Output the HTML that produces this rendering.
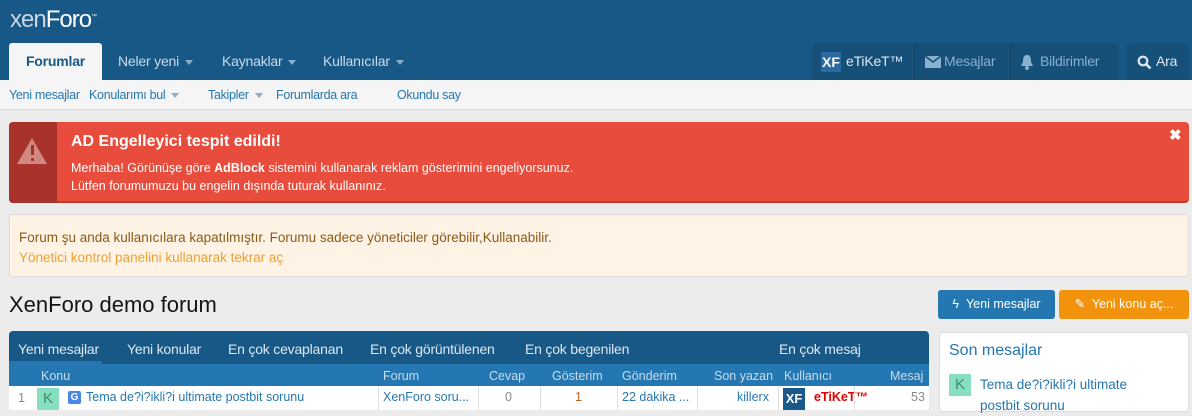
<!DOCTYPE html>
<html><head><meta charset="utf-8"><style>
*{box-sizing:border-box;margin:0;padding:0}
body{width:1192px;height:410px;overflow:hidden;background:#ececec;font-family:"Liberation Sans",sans-serif;font-size:13px;color:#141414;position:relative}
.a{position:absolute;white-space:nowrap}
#hdr{position:absolute;left:0;top:0;width:1192px;height:80px;background:#185886}
.logo{left:10px;top:6px;font-size:24px;color:#fff;letter-spacing:-1px}
.logo span{color:#c8d6e2}
.tab{top:43px;height:37px;line-height:37px;font-size:14px;color:#c8dcec;letter-spacing:-0.2px}
.car{display:inline-block;border-left:4px solid transparent;border-right:4px solid transparent;border-top:5px solid #8ab0cf;margin-left:6px;vertical-align:middle}
#sub{position:absolute;left:0;top:80px;width:1192px;height:30px;background:#f5f5f5;border-bottom:1px solid #d8d8d8}
#sub .a{top:8px;color:#2577b1;font-size:12.5px;letter-spacing:-0.3px}
.rb{top:43px;height:37px;background:#164f78;border-radius:4px 4px 0 0}
</style></head><body>
<div id="hdr">
<div class="a logo"><span>xen</span>Foro<sup style="font-size:6px">™</sup></div>
<div class="a tab" style="left:9px;width:93px;background:#f5f5f5;border-radius:3px 3px 0 0;color:#185886;font-weight:bold;text-align:center;">Forumlar</div>
<div class="a tab" style="left:118px">Neler yeni<span class="car"></span></div>
<div class="a tab" style="left:222px">Kaynaklar<span class="car"></span></div>
<div class="a tab" style="left:323px">Kullanıcılar<span class="car"></span></div>
<div class="a rb" style="left:812px;width:307px"></div>
<div class="a rb" style="left:1127px;width:62px"></div>
<div class="a" style="left:821px;top:52px;width:20px;height:20px;background:#2a6aa0;color:#fff;font-weight:bold;font-size:14px;line-height:20px;text-align:center">XF</div>
<div class="a tab" style="left:846px;color:#dce8f2">eTiKeT™</div>
<div class="a" style="left:914px;top:43px;width:1px;height:37px;background:#134569"></div>
<div class="a" style="left:1010px;top:43px;width:1px;height:37px;background:#134569"></div>
<svg class="a" style="left:925px;top:56px" width="16" height="12" viewBox="0 0 16 12"><rect width="16" height="12" fill="#8ab0cf"/><path d="M0 0 L8 6 L16 0" stroke="#164f78" stroke-width="1.5" fill="none"/></svg>
<div class="a tab" style="left:944px;color:#8ab0cf">Mesajlar</div>
<svg class="a" style="left:1020px;top:54px" width="14" height="16" viewBox="0 0 14 16"><path d="M7 1 C3 1 3 5 3 8 L1 12 L13 12 L11 8 C11 5 11 1 7 1Z" fill="#8ab0cf"/><circle cx="7" cy="14" r="2" fill="#8ab0cf"/></svg>
<div class="a tab" style="left:1040px;color:#8ab0cf">Bildirimler</div>
<svg class="a" style="left:1137px;top:55px" width="15" height="15" viewBox="0 0 15 15"><circle cx="6" cy="6" r="4.3" stroke="#dce8f2" stroke-width="2.2" fill="none"/><path d="M9 9 L13.5 13.5" stroke="#dce8f2" stroke-width="2.6"/></svg>
<div class="a tab" style="left:1156px;color:#dce8f2">Ara</div>
</div>
<div id="sub">
<div class="a" style="left:9px">Yeni mesajlar</div>
<div class="a" style="left:89px">Konularımı bul<span class="car"></span></div>
<div class="a" style="left:208px">Takipler<span class="car"></span></div>
<div class="a" style="left:276px">Forumlarda ara</div>
<div class="a" style="left:397px">Okundu say</div>
</div>
<div class="a" style="left:9px;top:122px;width:1180px;height:81px;background:#e74c3c;border-radius:4px;border-bottom:2px solid #c0392b"></div>
<div class="a" style="left:9px;top:122px;width:48px;height:81px;background:#a8332b;border-radius:4px 0 0 4px"></div>
<div class="a" style="left:17px;top:138px;width:0;height:0;border-left:15px solid transparent;border-right:15px solid transparent;border-bottom:26px solid #d08880"></div>
<div class="a" style="left:31px;top:145px;width:3px;height:10px;background:#a8332b"></div>
<div class="a" style="left:31px;top:158px;width:3px;height:3px;background:#a8332b"></div>
<div class="a" style="left:71px;top:133px;color:#fff;font-weight:bold;font-size:16px">AD Engelleyici tespit edildi!</div>
<div class="a" style="left:71px;top:161px;color:#fff;font-size:12.5px">Merhaba! Görünüşe göre <b>AdBlock</b> sistemini kullanarak reklam gösterimini engeliyorsunuz.</div>
<div class="a" style="left:71px;top:179px;color:#fff;font-size:12.5px">Lütfen forumumuzu bu engelin dışında tuturak kullanınız.</div>
<div class="a" style="left:1169px;top:126px;color:#fff;font-weight:bold;font-size:15px">✖</div>
<div class="a" style="left:9px;top:214px;width:1180px;height:63px;background:#fef3e5;border:1px solid #dcdcdc;border-radius:3px"></div>
<div class="a" style="left:19px;top:230px;color:#8c5a18;font-size:13.5px">Forum şu anda kullanıcılara kapatılmıştır. Forumu sadece yöneticiler görebilir,Kullanabilir.</div>
<div class="a" style="left:19px;top:250px;color:#f0a030;font-size:13.5px">Yönetici kontrol panelini kullanarak tekrar aç</div>
<div class="a" style="left:9px;top:292px;font-size:22px;color:#141414">XenForo demo forum</div>
<div class="a" style="left:938px;top:290px;width:117px;height:29px;background:#2577b1;border-radius:3px;color:#fff;line-height:29px;text-align:center;font-size:12.5px">ϟ&nbsp; Yeni mesajlar</div>
<div class="a" style="left:1059px;top:290px;width:130px;height:29px;background:#f2930d;border-radius:3px;color:#fff;line-height:29px;text-align:center;font-size:12.5px">✎&nbsp; Yeni konu aç...</div>
<div class="a" style="left:9px;top:331px;width:920px;height:79px;background:#185886;border-radius:4px 4px 0 0"></div>
<div class="a" style="left:9px;top:364px;width:920px;height:22px;background:#2577b1"></div>
<div class="a" style="left:9px;top:386px;width:920px;height:24px;background:#fff"></div>
<div class="a" style="left:9px;top:361px;width:93px;height:3px;background:#2577b1"></div>
<div style="color:#dce8f2;font-size:14px;letter-spacing:-0.2px">
<div class="a" style="left:18px;top:341px">Yeni mesajlar</div>
<div class="a" style="left:127px;top:341px">Yeni konular</div>
<div class="a" style="left:228px;top:341px">En çok cevaplanan</div>
<div class="a" style="left:370px;top:341px">En çok görüntülenen</div>
<div class="a" style="left:525px;top:341px">En çok begenilen</div>
<div class="a" style="left:779px;top:341px">En çok mesaj</div>
</div>
<div style="color:#c8dcec;font-size:12.5px">
<div class="a" style="left:41px;top:369px">Konu</div>
<div class="a" style="left:383px;top:369px">Forum</div>
<div class="a" style="left:489px;top:369px">Cevap</div>
<div class="a" style="left:552px;top:369px">Gösterim</div>
<div class="a" style="left:622px;top:369px">Gönderim</div>
<div class="a" style="left:714px;top:369px">Son yazan</div>
<div class="a" style="left:784px;top:369px">Kullanıcı</div>
<div class="a" style="left:890px;top:369px">Mesaj</div>
</div>
<div style="font-size:12.5px">
<div class="a" style="left:18px;top:391px;color:#8a8a8a">1</div>
<div class="a" style="left:37px;top:388px;width:22px;height:22px;background:#88dfc0;color:#3c8a6a;text-align:center;line-height:22px;font-size:15px">K</div>
<div class="a" style="left:68px;top:391px;width:13px;height:13px;background:#4a88e8;color:#fff;border-radius:2px;font-weight:bold;font-size:10px;text-align:center;line-height:13px">G</div>
<div class="a" style="left:86px;top:390px;color:#2577b1">Tema de?i?ikli?i ultimate postbit sorunu</div>
<div class="a" style="left:378px;top:386px;width:1px;height:24px;background:#e0e0e0"></div>
<div class="a" style="left:383px;top:390px;color:#2577b1">XenForo soru...</div>
<div class="a" style="left:478px;top:386px;width:1px;height:24px;background:#e0e0e0"></div>
<div class="a" style="left:505px;top:390px;color:#8a8a8a">0</div>
<div class="a" style="left:540px;top:386px;width:1px;height:24px;background:#e0e0e0"></div>
<div class="a" style="left:575px;top:390px;color:#c06020">1</div>
<div class="a" style="left:617px;top:386px;width:1px;height:24px;background:#e0e0e0"></div>
<div class="a" style="left:622px;top:390px;color:#2577b1">22 dakika ...</div>
<div class="a" style="left:697px;top:386px;width:1px;height:24px;background:#e0e0e0"></div>
<div class="a" style="left:737px;top:390px;color:#2577b1">killerx</div>
<div class="a" style="left:778px;top:386px;width:1px;height:24px;background:#e0e0e0"></div>
<div class="a" style="left:783px;top:388px;width:22px;height:22px;background:#1a5a8a;color:#fff;font-weight:bold;font-size:13px;text-align:center;line-height:22px">XF</div>
<div class="a" style="left:814px;top:390px;color:#e00000;font-weight:bold">eTiKeT™</div>
<div class="a" style="left:854px;top:386px;width:1px;height:24px;background:#e0e0e0"></div>
<div class="a" style="left:911px;top:390px;color:#8a8a8a">53</div>
</div>
<div class="a" style="left:939px;top:332px;width:250px;height:80px;background:#fff;border:1px solid #dcdcdc;border-radius:3px"></div>
<div class="a" style="left:949px;top:342px;color:#2577b1;font-size:16px">Son mesajlar</div>
<div class="a" style="left:949px;top:374px;width:22px;height:22px;background:#88dfc0;color:#3c8a6a;text-align:center;line-height:22px;font-size:15px">K</div>
<div class="a" style="left:980px;top:374px;color:#2577b1;font-size:13.5px;line-height:21px">Tema de?i?ikli?i ultimate<br>postbit sorunu</div>
</body></html>
